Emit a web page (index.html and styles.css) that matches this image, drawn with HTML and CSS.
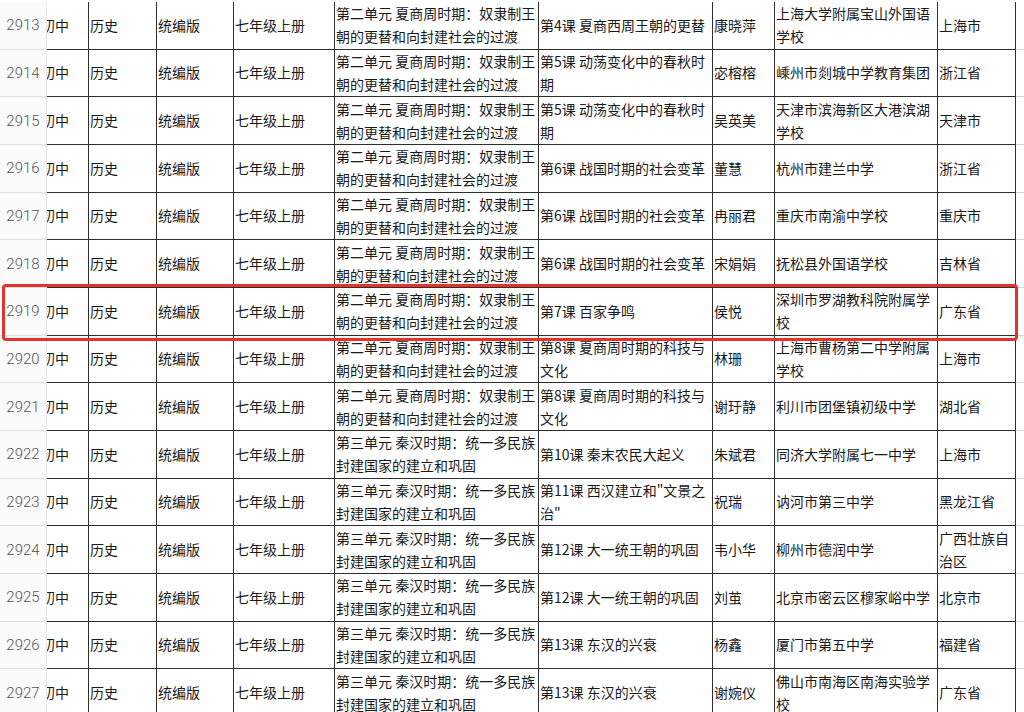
FILE: index.html
```html
<!DOCTYPE html>
<html lang="zh-CN">
<head>
<meta charset="utf-8">
<title>Sheet</title>
<link rel="stylesheet" href="styles.css">
</head>
<body>
<div class="sheet">
  <div class="row"><div class="hd">2913</div><div class="c clip"><span>初中</span></div><div class="c">历史</div><div class="c">统编版</div><div class="c">七年级上册</div><div class="c">第二单元 夏商周时期：奴隶制王<br>朝的更替和向封建社会的过渡</div><div class="c">第4课 夏商西周王朝的更替</div><div class="c">康晓萍</div><div class="c">上海大学附属宝山外国语<br>学校</div><div class="c">上海市</div><div class="x"></div></div>
  <div class="row"><div class="hd">2914</div><div class="c clip"><span>初中</span></div><div class="c">历史</div><div class="c">统编版</div><div class="c">七年级上册</div><div class="c">第二单元 夏商周时期：奴隶制王<br>朝的更替和向封建社会的过渡</div><div class="c">第5课 动荡变化中的春秋时<br>期</div><div class="c">宓榕榕</div><div class="c">嵊州市剡城中学教育集团</div><div class="c">浙江省</div><div class="x"></div></div>
  <div class="row"><div class="hd">2915</div><div class="c clip"><span>初中</span></div><div class="c">历史</div><div class="c">统编版</div><div class="c">七年级上册</div><div class="c">第二单元 夏商周时期：奴隶制王<br>朝的更替和向封建社会的过渡</div><div class="c">第5课 动荡变化中的春秋时<br>期</div><div class="c">吴英美</div><div class="c">天津市滨海新区大港滨湖<br>学校</div><div class="c">天津市</div><div class="x"></div></div>
  <div class="row"><div class="hd">2916</div><div class="c clip"><span>初中</span></div><div class="c">历史</div><div class="c">统编版</div><div class="c">七年级上册</div><div class="c">第二单元 夏商周时期：奴隶制王<br>朝的更替和向封建社会的过渡</div><div class="c">第6课 战国时期的社会变革</div><div class="c">董慧</div><div class="c">杭州市建兰中学</div><div class="c">浙江省</div><div class="x"></div></div>
  <div class="row"><div class="hd">2917</div><div class="c clip"><span>初中</span></div><div class="c">历史</div><div class="c">统编版</div><div class="c">七年级上册</div><div class="c">第二单元 夏商周时期：奴隶制王<br>朝的更替和向封建社会的过渡</div><div class="c">第6课 战国时期的社会变革</div><div class="c">冉丽君</div><div class="c">重庆市南渝中学校</div><div class="c">重庆市</div><div class="x"></div></div>
  <div class="row"><div class="hd">2918</div><div class="c clip"><span>初中</span></div><div class="c">历史</div><div class="c">统编版</div><div class="c">七年级上册</div><div class="c">第二单元 夏商周时期：奴隶制王<br>朝的更替和向封建社会的过渡</div><div class="c">第6课 战国时期的社会变革</div><div class="c">宋娟娟</div><div class="c">抚松县外国语学校</div><div class="c">吉林省</div><div class="x"></div></div>
  <div class="row"><div class="hd">2919</div><div class="c clip"><span>初中</span></div><div class="c">历史</div><div class="c">统编版</div><div class="c">七年级上册</div><div class="c">第二单元 夏商周时期：奴隶制王<br>朝的更替和向封建社会的过渡</div><div class="c">第7课 百家争鸣</div><div class="c">侯悦</div><div class="c">深圳市罗湖教科院附属学<br>校</div><div class="c">广东省</div><div class="x"></div></div>
  <div class="row"><div class="hd">2920</div><div class="c clip"><span>初中</span></div><div class="c">历史</div><div class="c">统编版</div><div class="c">七年级上册</div><div class="c">第二单元 夏商周时期：奴隶制王<br>朝的更替和向封建社会的过渡</div><div class="c">第8课 夏商周时期的科技与<br>文化</div><div class="c">林珊</div><div class="c">上海市曹杨第二中学附属<br>学校</div><div class="c">上海市</div><div class="x"></div></div>
  <div class="row"><div class="hd">2921</div><div class="c clip"><span>初中</span></div><div class="c">历史</div><div class="c">统编版</div><div class="c">七年级上册</div><div class="c">第二单元 夏商周时期：奴隶制王<br>朝的更替和向封建社会的过渡</div><div class="c">第8课 夏商周时期的科技与<br>文化</div><div class="c">谢玗静</div><div class="c">利川市团堡镇初级中学</div><div class="c">湖北省</div><div class="x"></div></div>
  <div class="row"><div class="hd">2922</div><div class="c clip"><span>初中</span></div><div class="c">历史</div><div class="c">统编版</div><div class="c">七年级上册</div><div class="c">第三单元 秦汉时期：统一多民族<br>封建国家的建立和巩固</div><div class="c">第10课 秦末农民大起义</div><div class="c">朱斌君</div><div class="c">同济大学附属七一中学</div><div class="c">上海市</div><div class="x"></div></div>
  <div class="row"><div class="hd">2923</div><div class="c clip"><span>初中</span></div><div class="c">历史</div><div class="c">统编版</div><div class="c">七年级上册</div><div class="c">第三单元 秦汉时期：统一多民族<br>封建国家的建立和巩固</div><div class="c">第11课 西汉建立和"文景之<br>治"</div><div class="c">祝瑞</div><div class="c">讷河市第三中学</div><div class="c">黑龙江省</div><div class="x"></div></div>
  <div class="row"><div class="hd">2924</div><div class="c clip"><span>初中</span></div><div class="c">历史</div><div class="c">统编版</div><div class="c">七年级上册</div><div class="c">第三单元 秦汉时期：统一多民族<br>封建国家的建立和巩固</div><div class="c">第12课 大一统王朝的巩固</div><div class="c">韦小华</div><div class="c">柳州市德润中学</div><div class="c">广西壮族自<br>治区</div><div class="x"></div></div>
  <div class="row"><div class="hd">2925</div><div class="c clip"><span>初中</span></div><div class="c">历史</div><div class="c">统编版</div><div class="c">七年级上册</div><div class="c">第三单元 秦汉时期：统一多民族<br>封建国家的建立和巩固</div><div class="c">第12课 大一统王朝的巩固</div><div class="c">刘茧</div><div class="c">北京市密云区穆家峪中学</div><div class="c">北京市</div><div class="x"></div></div>
  <div class="row"><div class="hd">2926</div><div class="c clip"><span>初中</span></div><div class="c">历史</div><div class="c">统编版</div><div class="c">七年级上册</div><div class="c">第三单元 秦汉时期：统一多民族<br>封建国家的建立和巩固</div><div class="c">第13课 东汉的兴衰</div><div class="c">杨鑫</div><div class="c">厦门市第五中学</div><div class="c">福建省</div><div class="x"></div></div>
  <div class="row"><div class="hd">2927</div><div class="c clip"><span>初中</span></div><div class="c">历史</div><div class="c">统编版</div><div class="c">七年级上册</div><div class="c">第三单元 秦汉时期：统一多民族<br>封建国家的建立和巩固</div><div class="c">第13课 东汉的兴衰</div><div class="c">谢婉仪</div><div class="c">佛山市南海区南海实验学<br>校</div><div class="c">广东省</div><div class="x"></div></div>
  <div class="mark"></div>
</div>
</body>
</html>
```

FILE: styles.css
```css
html, body {
  margin: 0;
  padding: 0;
  background: #ffffff;
  overflow: hidden;
}

.sheet {
  position: relative;
  width: 1024px;
  height: 712px;
  overflow: hidden;
  padding-top: 2px;
  box-sizing: border-box;
  font-family: "Noto Sans CJK SC", "Noto Sans", sans-serif;
  font-size: 14px;
  color: #1a1a1a;
}

.row {
  display: grid;
  grid-template-columns: 47px 42px 68px 77px 101px 204px 174px 62px 163px 78px 1fr;
  height: 47.67px;
}

.hd {
  display: flex;
  align-items: center;
  justify-content: center;
  background: #fbfbfb;
  border-right: 1px solid #e8e8e8;
  border-bottom: 1px solid #dedede;
  box-sizing: border-box;
  font-family: Roboto, "Noto Sans", sans-serif;
  font-size: 15px;
  font-weight: 300;
  color: #555555;
}

.c {
  display: flex;
  align-items: center;
  padding: 0 1px;
  border-right: 1px solid #2e2e2e;
  border-bottom: 1px solid #2e2e2e;
  box-sizing: border-box;
  white-space: nowrap;
  overflow: hidden;
  line-height: 23px;
}

.clip {
  padding: 0;
}

.clip span {
  margin-left: -6px;
}

.x {
  border-bottom: 1px solid #d6d6d6;
  box-sizing: border-box;
}

.mark {
  position: absolute;
  left: 2px;
  top: 284px;
  width: 1016px;
  height: 57px;
  border: 3px solid #e63329;
  border-radius: 4px;
  box-sizing: border-box;
}
```
